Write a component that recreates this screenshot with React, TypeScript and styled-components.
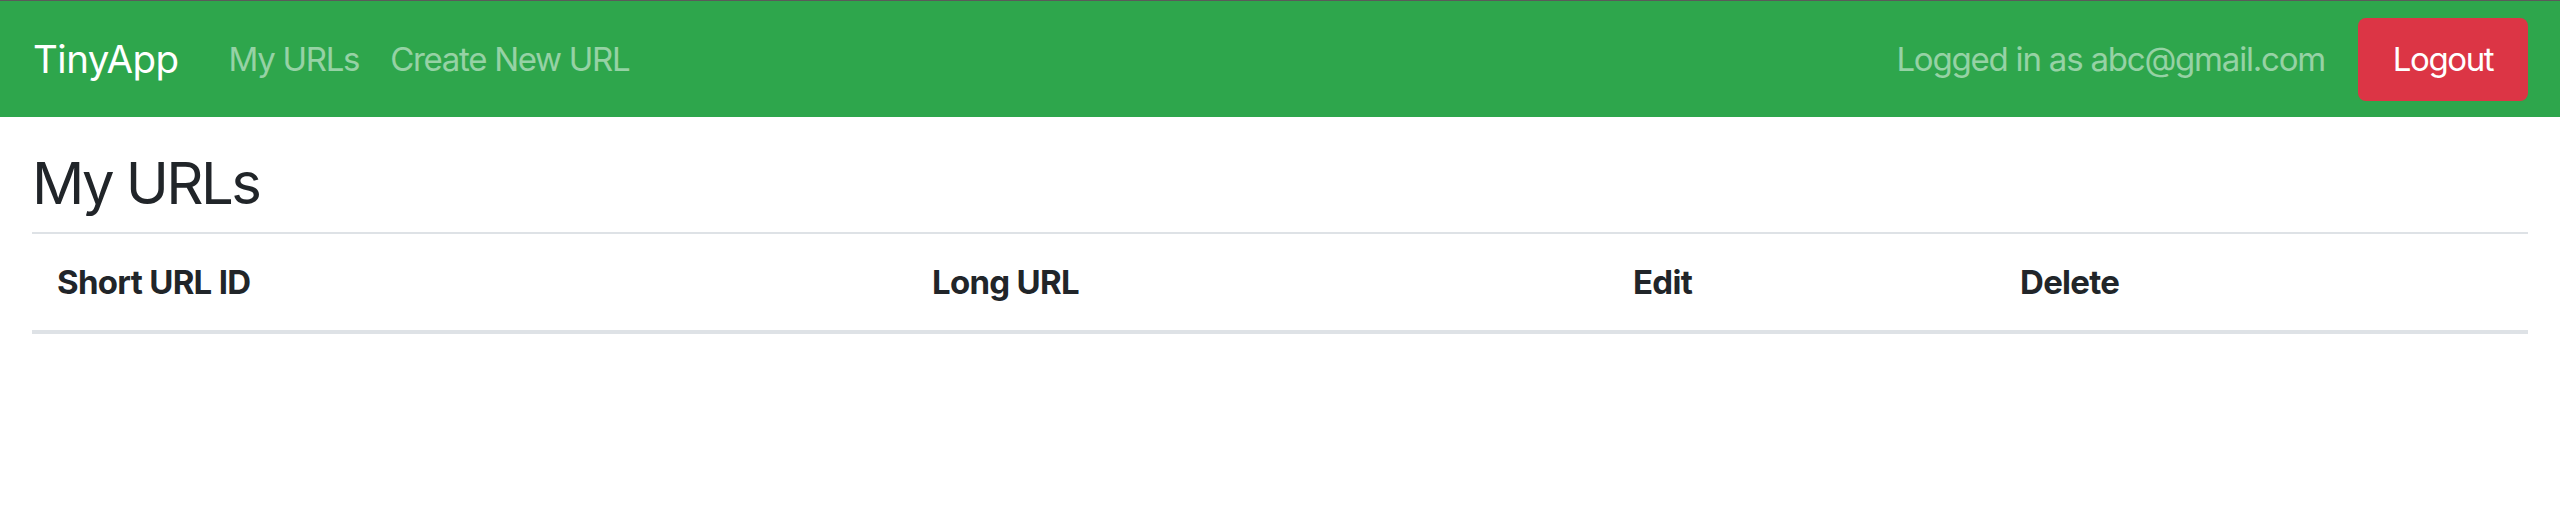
import React from 'react';
import styled, { createGlobalStyle } from 'styled-components';

const GlobalStyle = createGlobalStyle`
  html, body {
    margin: 0;
    padding: 0;
    background: #ffffff;
  }

  body {
    font-family: Inter, "Liberation Sans", Arial, sans-serif;
    color: #212529;
  }
`;

const Navbar = styled.nav`
  height: 116px;
  border-top: 1px solid #5a5a5a;
  background: #2ea64c;
  display: flex;
  align-items: center;
  padding: 0 32px 0 33px;
`;

const Brand = styled.a`
  font-size: 38.5px;
  letter-spacing: -0.5px;
  color: #ffffff;
  text-decoration: none;
  margin-right: 50px;
`;

const NavLinks = styled.div`
  display: flex;
  gap: 31px;
  flex: 1;
`;

const NavLink = styled.a`
  font-size: 33px;
  letter-spacing: -1.3px;
  color: rgba(255, 255, 255, 0.5);
  text-decoration: none;
`;

const UserArea = styled.div`
  display: flex;
  align-items: center;
  gap: 33px;
`;

const LoggedIn = styled.span`
  font-size: 33px;
  letter-spacing: -1.2px;
  color: rgba(255, 255, 255, 0.5);
`;

const LogoutButton = styled.button`
  height: 83px;
  width: 170px;
  border: none;
  border-radius: 8px;
  background: #dc3545;
  color: #ffffff;
  font-family: inherit;
  font-size: 33px;
  letter-spacing: -1.4px;
  cursor: pointer;
`;

const Main = styled.main`
  padding: 0 32px;
`;

const Heading = styled.h2`
  margin: 30px 0 13px;
  font-size: 58px;
  font-weight: 400;
  letter-spacing: -2.6px;
  line-height: 72px;
  color: #212529;
`;

const Table = styled.table`
  width: 100%;
  table-layout: fixed;
  border-collapse: collapse;
  border-top: 2px solid #dee2e6;
`;

const HeadCell = styled.th<{ $width: number }>`
  box-sizing: border-box;
  width: ${p => p.$width}px;
  text-align: left;
  font-size: 33px;
  font-weight: 700;
  letter-spacing: -0.7px;
  padding: 24px 25px;
  line-height: 48px;
  border-bottom: 4px solid #dee2e6;
  color: #212529;
`;

const columns = [
  { label: 'Short URL ID', width: 875 },
  { label: 'Long URL', width: 701 },
  { label: 'Edit', width: 387 },
  { label: 'Delete', width: 533 },
];

export default function App() {
  return (
    <>
      <GlobalStyle />
      <Navbar>
        <Brand href="#">TinyApp</Brand>
        <NavLinks>
          <NavLink href="#">My URLs</NavLink>
          <NavLink href="#">Create New URL</NavLink>
        </NavLinks>
        <UserArea>
          <LoggedIn>Logged in as abc@gmail.com</LoggedIn>
          <LogoutButton>Logout</LogoutButton>
        </UserArea>
      </Navbar>
      <Main>
        <Heading>My URLs</Heading>
        <Table>
          <thead>
            <tr>
              {columns.map(col => (
                <HeadCell key={col.label} $width={col.width}>
                  {col.label}
                </HeadCell>
              ))}
            </tr>
          </thead>
          <tbody />
        </Table>
      </Main>
    </>
  );
}
